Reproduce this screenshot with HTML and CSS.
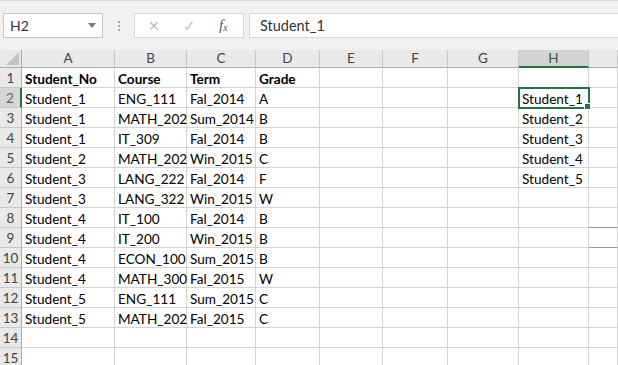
FILE: index.html
```html
<!DOCTYPE html>
<html lang="en">
<head>
    <meta charset="UTF-8">
    <title>Book1 - Excel</title>
    <link rel="stylesheet" href="styles.css">
</head>
<body>
    <div class="formula-bar">
        <div class="name-box">
            <span>H2</span>
            <span class="caret"></span>
        </div>
        <div class="grip"><i></i><i></i><i></i></div>
        <div class="fx-buttons">
            <span class="btn-cancel">&#x2715;</span>
            <span class="btn-enter">&#x2713;</span>
            <span class="btn-fx">f<sub>x</sub></span>
        </div>
        <div class="formula-input">Student_1</div>
    </div>

    <div class="sheet">
        <div class="corner"></div>
        <div class="colhead">A</div>
        <div class="colhead">B</div>
        <div class="colhead">C</div>
        <div class="colhead">D</div>
        <div class="colhead">E</div>
        <div class="colhead">F</div>
        <div class="colhead">G</div>
        <div class="colhead selected">H</div>
        <div class="colhead"></div>

        <div class="rowhead">1</div>
        <div class="cell bold">Student_No</div><div class="cell bold">Course</div><div class="cell bold">Term</div><div class="cell bold">Grade</div>
        <div class="cell"></div><div class="cell"></div><div class="cell"></div><div class="cell"></div><div class="cell"></div>

        <div class="rowhead selected">2</div>
        <div class="cell">Student_1</div><div class="cell">ENG_111</div><div class="cell">Fal_2014</div><div class="cell">A</div>
        <div class="cell"></div><div class="cell"></div><div class="cell"></div><div class="cell active">Student_1</div><div class="cell"></div>

        <div class="rowhead">3</div>
        <div class="cell">Student_1</div><div class="cell">MATH_202</div><div class="cell">Sum_2014</div><div class="cell">B</div>
        <div class="cell"></div><div class="cell"></div><div class="cell"></div><div class="cell">Student_2</div><div class="cell"></div>

        <div class="rowhead">4</div>
        <div class="cell">Student_1</div><div class="cell">IT_309</div><div class="cell">Fal_2014</div><div class="cell">B</div>
        <div class="cell"></div><div class="cell"></div><div class="cell"></div><div class="cell">Student_3</div><div class="cell"></div>

        <div class="rowhead">5</div>
        <div class="cell">Student_2</div><div class="cell">MATH_202</div><div class="cell">Win_2015</div><div class="cell">C</div>
        <div class="cell"></div><div class="cell"></div><div class="cell"></div><div class="cell">Student_4</div><div class="cell"></div>

        <div class="rowhead">6</div>
        <div class="cell">Student_3</div><div class="cell">LANG_222</div><div class="cell">Fal_2014</div><div class="cell">F</div>
        <div class="cell"></div><div class="cell"></div><div class="cell"></div><div class="cell">Student_5</div><div class="cell"></div>

        <div class="rowhead">7</div>
        <div class="cell">Student_3</div><div class="cell">LANG_322</div><div class="cell">Win_2015</div><div class="cell">W</div>
        <div class="cell"></div><div class="cell"></div><div class="cell"></div><div class="cell"></div><div class="cell"></div>

        <div class="rowhead">8</div>
        <div class="cell">Student_4</div><div class="cell">IT_100</div><div class="cell">Fal_2014</div><div class="cell">B</div>
        <div class="cell"></div><div class="cell"></div><div class="cell"></div><div class="cell"></div><div class="cell"></div>

        <div class="rowhead">9</div>
        <div class="cell">Student_4</div><div class="cell">IT_200</div><div class="cell">Win_2015</div><div class="cell">B</div>
        <div class="cell"></div><div class="cell"></div><div class="cell"></div><div class="cell"></div><div class="cell bordered"></div>

        <div class="rowhead">10</div>
        <div class="cell">Student_4</div><div class="cell">ECON_100</div><div class="cell">Sum_2015</div><div class="cell">B</div>
        <div class="cell"></div><div class="cell"></div><div class="cell"></div><div class="cell"></div><div class="cell"></div>

        <div class="rowhead">11</div>
        <div class="cell">Student_4</div><div class="cell">MATH_300</div><div class="cell">Fal_2015</div><div class="cell">W</div>
        <div class="cell"></div><div class="cell"></div><div class="cell"></div><div class="cell"></div><div class="cell"></div>

        <div class="rowhead">12</div>
        <div class="cell">Student_5</div><div class="cell">ENG_111</div><div class="cell">Sum_2015</div><div class="cell">C</div>
        <div class="cell"></div><div class="cell"></div><div class="cell"></div><div class="cell"></div><div class="cell"></div>

        <div class="rowhead">13</div>
        <div class="cell">Student_5</div><div class="cell">MATH_202</div><div class="cell">Fal_2015</div><div class="cell">C</div>
        <div class="cell"></div><div class="cell"></div><div class="cell"></div><div class="cell"></div><div class="cell"></div>

        <div class="rowhead">14</div>
        <div class="cell"></div><div class="cell"></div><div class="cell"></div><div class="cell"></div>
        <div class="cell"></div><div class="cell"></div><div class="cell"></div><div class="cell"></div><div class="cell"></div>

        <div class="rowhead">15</div>
        <div class="cell"></div><div class="cell"></div><div class="cell"></div><div class="cell"></div>
        <div class="cell"></div><div class="cell"></div><div class="cell"></div><div class="cell"></div><div class="cell"></div>
    </div>
</body>
</html>
```

FILE: styles.css
```css
* {
    box-sizing: border-box;
}

html, body {
    margin: 0;
    padding: 0;
    overflow: hidden;
}

body {
    width: 618px;
    height: 365px;
    background: #fff;
    font-family: Lato, 'Liberation Sans', sans-serif;
    color: #000;
}

/* formula bar */

.formula-bar {
    height: 50px;
    background: #f1f1f1;
    border-top: 1px solid #dcdcdc;
    display: flex;
    align-items: flex-start;
    padding: 12px 0 0 3px;
}

.name-box {
    width: 100px;
    height: 25px;
    background: #fff;
    border: 1px solid #c6c6c6;
    display: flex;
    align-items: center;
    justify-content: space-between;
    padding: 0 6px 0 6px;
    font-size: 14px;
    color: #333;
}

.caret {
    width: 0;
    height: 0;
    border-left: 4px solid transparent;
    border-right: 4px solid transparent;
    border-top: 5px solid #7a7a7a;
}

.grip {
    width: 31px;
    height: 25px;
    display: flex;
    flex-direction: column;
    align-items: center;
    justify-content: center;
    gap: 2px;
}

.grip i {
    width: 2px;
    height: 2px;
    background: #a6a6a6;
}

.fx-buttons {
    width: 110px;
    height: 25px;
    background: #fff;
    border: 1px solid #d6d6d6;
    display: flex;
    align-items: center;
    padding-left: 13px;
}

.btn-cancel {
    color: #bdbdbd;
    font-size: 14px;
    width: 35px;
    font-family: 'DejaVu Sans', sans-serif;
}

.btn-enter {
    color: #c4c4c4;
    font-size: 15px;
    width: 36px;
    font-family: 'DejaVu Sans', sans-serif;
}

.btn-fx {
    font-family: 'Liberation Serif', serif;
    font-style: italic;
    font-size: 15px;
    color: #555;
}

.btn-fx sub {
    font-size: 10px;
    vertical-align: -1px;
}

.formula-input {
    flex: 1;
    height: 25px;
    margin-left: 5px;
    background: #fff;
    border: 1px solid #d6d6d6;
    border-right: none;
    padding-left: 10px;
    font-size: 14.5px;
    line-height: 23px;
    color: #333;
}

/* grid */

.sheet {
    display: grid;
    grid-template-columns: 22px 93px 72px 69px 64px 63px 65px 71px 70px 29px;
    grid-template-rows: 18px;
    grid-auto-rows: 20px;
    font-size: 13.6px;
}

.corner {
    background: #e9e9e9;
    border-right: 1px solid #ababab;
    border-bottom: 1px solid #ababab;
    position: relative;
}

.corner::after {
    content: "";
    position: absolute;
    right: 2px;
    bottom: 2px;
    border-left: 13px solid transparent;
    border-bottom: 13px solid #c4c4c4;
}

.colhead {
    background: #e9e9e9;
    border-right: 1px solid #c8c8c8;
    border-bottom: 1px solid #ababab;
    text-align: center;
    font-size: 13.5px;
    line-height: 17px;
    color: #444;
}

.colhead.selected {
    background: #d3d3d3;
    border-bottom: 2px solid #217346;
    color: #3d5a4a;
}

.rowhead {
    background: #e9e9e9;
    border-right: 1px solid #ababab;
    border-bottom: 1px solid #c8c8c8;
    text-align: center;
    font-size: 13.5px;
    line-height: 20px;
    color: #444;
}

.rowhead.selected {
    background: #d6d6d6;
    border-right: 2px solid #217346;
    color: #556b5f;
}

.cell {
    border-right: 1px solid #d4d4d4;
    border-bottom: 1px solid #d4d4d4;
    padding: 2px 0 0 3px;
    line-height: 18px;
    white-space: nowrap;
    overflow: visible;
}

.cell.bold {
    font-weight: bold;
}

.cell.active {
    position: relative;
    z-index: 1;
    outline: 2px solid #217346;
    outline-offset: -1px;
}

.cell.active::after {
    content: "";
    position: absolute;
    right: -3px;
    bottom: -3px;
    width: 5px;
    height: 5px;
    background: #217346;
    border: 1px solid #fff;
}

.cell.bordered {
    border-top: 1px solid #8e9bb4;
    border-bottom: 1px solid #8e9bb4;
    margin-top: -1px;
}
```
